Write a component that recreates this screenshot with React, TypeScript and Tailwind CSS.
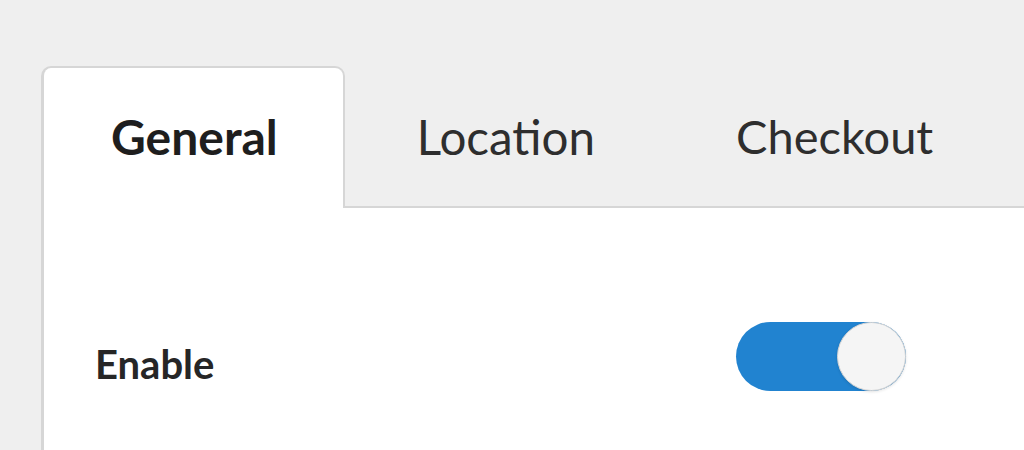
import React from "react";

export default function App() {
  const font = { fontFamily: "Lato, 'Noto Sans', sans-serif" };
  return (
    <div className="w-[1024px] h-[450px] overflow-hidden bg-[#efefef] pl-[41px] pt-[66px] flex flex-col" style={font}>
      <div className="flex items-end border-b-2 border-[#d6d6d6]">
        <div className="relative z-10 -mb-[2px] bg-white border-2 border-l-[3px] border-b-0 border-[#d6d6d6] rounded-t-[10px] pl-[67px] pr-[65px] pt-[41px] pb-[44px] text-[48px] leading-[55px] font-bold text-[#1e1e1e]">
          General
        </div>
        <div className="pl-[72px] pr-[70px] pt-[41px] pb-[42px] text-[47.5px] leading-[55px] text-[#2e2e2e]">
          Location
        </div>
        <div className="pl-[71px] pr-[70px] pt-[41px] pb-[42px] text-[47px] leading-[55px] text-[#2e2e2e]">
          Checkout
        </div>
      </div>
      <div className="flex-1 bg-white border-l-[3px] border-[#d6d6d6] pl-[51px] pt-[114px]">
        <div className="flex items-end">
          <div className="w-[641px] mb-[3px] text-[40px] leading-[47px] font-bold text-[#262626]">
            Enable
          </div>
          <div className="relative w-[170px] h-[69px] rounded-full bg-[#2183d0]">
            <div className="absolute right-0 top-0 w-[69px] h-[69px] rounded-full bg-[#f5f5f5] border border-[#d4d4d4] shadow-[0_1px_3px_rgba(0,0,0,0.12)]" />
          </div>
        </div>
      </div>
    </div>
  );
}
